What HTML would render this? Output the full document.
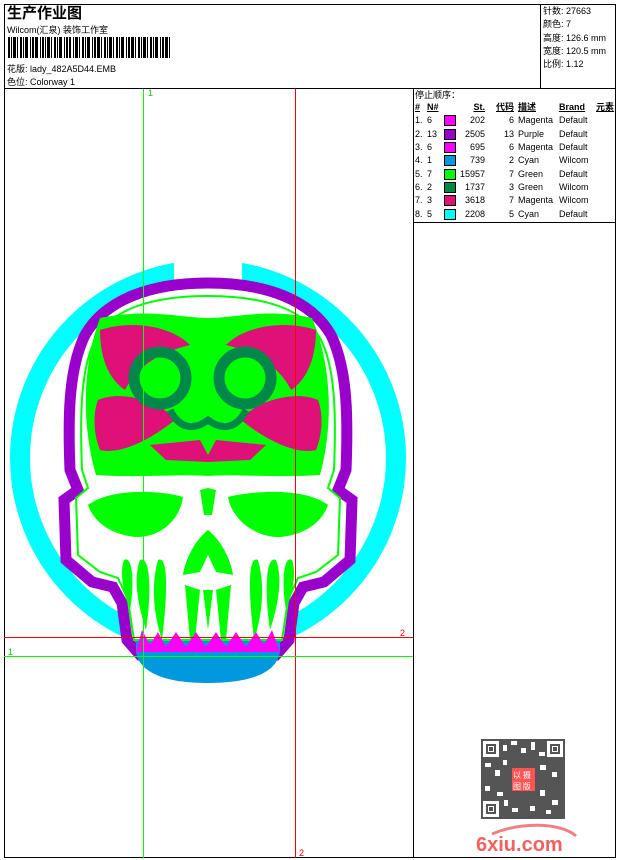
<!DOCTYPE html>
<html><head><meta charset="utf-8"><style>
body{margin:0;width:620px;height:860px;background:#fff;position:relative;overflow:hidden;font-family:"Liberation Sans","Noto Sans CJK SC",sans-serif;font-size:9px;color:#000}
.a{position:absolute;white-space:nowrap}
.t td{padding:0;height:13.3px;line-height:13px}
</style></head><body>
<svg width="620" height="860" style="position:absolute;left:0;top:0">
<circle cx="208" cy="458" r="188" fill="none" stroke="#00ffff" stroke-width="20"/>
<rect x="174" y="250" width="68" height="40" fill="#fff"/>
<rect x="95" y="637" width="226" height="40" fill="#fff"/>
<g fill="none" stroke="#000" stroke-width="1">
<rect x="4.5" y="4.5" width="611" height="853"/>
<line x1="540.5" y1="4" x2="540.5" y2="88"/>
<line x1="4" y1="88.5" x2="616" y2="88.5"/>
<line x1="413.5" y1="88" x2="413.5" y2="858"/>
<line x1="413" y1="222.5" x2="616" y2="222.5"/>
</g>
<g fill="#000">
<rect x="8" y="37" width="2" height="21"/><rect x="11" y="37" width="1" height="21"/><rect x="13" y="37" width="3" height="21"/><rect x="17" y="37" width="1" height="21"/><rect x="20" y="37" width="2" height="21"/><rect x="23" y="37" width="1" height="21"/><rect x="25" y="37" width="3" height="21"/><rect x="30" y="37" width="1" height="21"/><rect x="32" y="37" width="2" height="21"/><rect x="35" y="37" width="3" height="21"/><rect x="40" y="37" width="1" height="21"/><rect x="42" y="37" width="2" height="21"/><rect x="45" y="37" width="1" height="21"/><rect x="47" y="37" width="3" height="21"/><rect x="51" y="37" width="1" height="21"/><rect x="54" y="37" width="2" height="21"/><rect x="57" y="37" width="1" height="21"/><rect x="59" y="37" width="3" height="21"/><rect x="64" y="37" width="1" height="21"/><rect x="66" y="37" width="2" height="21"/><rect x="69" y="37" width="2" height="21"/><rect x="73" y="37" width="1" height="21"/><rect x="75" y="37" width="3" height="21"/><rect x="79" y="37" width="1" height="21"/><rect x="82" y="37" width="2" height="21"/><rect x="85" y="37" width="1" height="21"/><rect x="87" y="37" width="3" height="21"/><rect x="92" y="37" width="1" height="21"/><rect x="94" y="37" width="2" height="21"/><rect x="97" y="37" width="3" height="21"/><rect x="101" y="37" width="1" height="21"/><rect x="104" y="37" width="2" height="21"/><rect x="107" y="37" width="1" height="21"/><rect x="109" y="37" width="3" height="21"/><rect x="113" y="37" width="1" height="21"/><rect x="116" y="37" width="2" height="21"/><rect x="119" y="37" width="1" height="21"/><rect x="121" y="37" width="3" height="21"/><rect x="126" y="37" width="1" height="21"/><rect x="128" y="37" width="2" height="21"/><rect x="131" y="37" width="3" height="21"/><rect x="135" y="37" width="1" height="21"/><rect x="138" y="37" width="2" height="21"/><rect x="141" y="37" width="1" height="21"/><rect x="143" y="37" width="3" height="21"/><rect x="147" y="37" width="1" height="21"/><rect x="150" y="37" width="2" height="21"/><rect x="153" y="37" width="1" height="21"/><rect x="155" y="37" width="3" height="21"/><rect x="160" y="37" width="1" height="21"/><rect x="162" y="37" width="2" height="21"/><rect x="165" y="37" width="3" height="21"/><rect x="169" y="37" width="1" height="21"/>
</g>
<path d="M208,283 C150,283 105,300 85,335 C68,370 68,420 70,470 L78,490 L64,500 L66,560 L92,582 L113,587 L122,603 L127,640 L140,655 L276,655 L289,640 L294,603 L303,587 L324,582 L350,560 L352,500 L338,490 L346,470 C348,420 348,370 331,335 C311,300 266,283 208,283 Z" stroke="#9900cc" stroke-width="11" fill="#fff"/>
<path d="M208,296 C150,296 110,310 95,340 C80,370 80,420 82,470 L88,488 L76,498 L78,555 L100,572 L118,578 L128,600 L134,640 L282,640 L288,600 L298,578 L316,572 L338,555 L340,498 L328,488 L334,470 C336,420 336,370 321,340 C306,310 266,296 208,296 Z" stroke="#00ff00" stroke-width="2" fill="none"/>
<path d="M100,318 C150,308 180,318 208,318 C236,318 266,308 312,318 C330,360 335,420 320,475 C280,478 240,474 208,476 C176,474 136,478 96,475 C80,420 84,360 100,318 Z" fill="#00ff00"/>
<path d="M100,330 C130,320 170,325 190,345 C170,350 140,360 125,390 C110,380 100,360 100,330 Z" fill="#dd1177"/>
<path d="M316,330 C286,320 246,325 226,345 C246,350 276,360 291,390 C306,380 316,360 316,330 Z" fill="#dd1177"/>
<path d="M98,400 C120,390 160,400 175,420 C150,440 120,455 100,450 C92,430 94,410 98,400 Z" fill="#dd1177"/>
<path d="M318,400 C296,390 256,400 241,420 C266,440 296,455 316,450 C324,430 322,410 318,400 Z" fill="#dd1177"/>
<path d="M150,445 L200,440 L208,455 L216,440 L266,445 L250,460 L208,462 L166,460 Z" fill="#dd1177"/>
<circle cx="160" cy="378" r="26" fill="none" stroke="#00884a" stroke-width="11"/>
<circle cx="245" cy="378" r="26" fill="none" stroke="#00884a" stroke-width="11"/>
<path d="M170,410 C180,430 195,430 208,420 C221,430 236,430 246,410" stroke="#00884a" stroke-width="7" fill="none"/>
<path d="M88,505 C110,488 160,490 183,497 C180,520 160,538 135,537 C110,534 94,522 88,505 Z" fill="#00ff00"/>
<path d="M328,505 C306,488 256,490 228,497 C232,520 256,538 281,537 C306,534 322,522 328,505 Z" fill="#00ff00"/>
<path d="M208,530 C195,540 185,560 183,575 L200,572 L208,555 L216,572 L233,575 C231,560 221,540 208,530 Z" fill="#00ff00"/>
<path d="M200,490 L208,488 L216,490 L212,515 L204,515 Z" fill="#00ff00"/>
<g fill="#00ff00">
<path d="M124,560 C132,555 135,580 130,610 C122,590 120,570 124,560Z"/>
<path d="M140,560 C150,555 152,590 146,630 C136,600 134,575 140,560Z"/>
<path d="M158,560 C168,555 168,590 162,640 C152,610 152,580 158,560Z"/>
<path d="M292,560 C284,555 281,580 286,610 C294,590 296,570 292,560Z"/>
<path d="M276,560 C266,555 264,590 270,630 C280,600 282,575 276,560Z"/>
<path d="M258,560 C248,555 248,590 254,640 C264,610 264,580 258,560Z"/>
<path d="M185,585 L200,590 L195,640 L190,640 Z"/><path d="M231,585 L216,590 L221,640 L226,640 Z"/>
<path d="M203,590 L213,590 L208,630 Z"/>
</g>
<path d="M136,652 C140,675 170,683 208,683 C246,683 276,675 280,652 L280,641 L136,641 Z" fill="#0099dd"/>
<path d="M136,652 L142,630 L150,645 L158,632 L166,647 L176,632 L186,647 L196,632 L206,647 L216,632 L226,647 L236,632 L246,647 L256,632 L264,645 L272,630 L280,652 Z" fill="#ff00ff"/>
<line x1="143.5" y1="89" x2="143.5" y2="858" stroke="#00ff00"/>
<line x1="295.5" y1="89" x2="295.5" y2="858" stroke="#ff0000"/>
<line x1="4" y1="637.5" x2="413" y2="637.5" stroke="#ff0000"/>
<line x1="4" y1="656.5" x2="413" y2="656.5" stroke="#00ff00"/>
<text x="148" y="96" font-size="9" fill="#00cc00" font-family="Liberation Sans">1</text>
<text x="400" y="636" font-size="9" fill="#ff0000" font-family="Liberation Sans">2</text>
<text x="8" y="655" font-size="9" fill="#00cc00" font-family="Liberation Sans">1</text>
<text x="299" y="856" font-size="9" fill="#ff0000" font-family="Liberation Sans">2</text>
<rect x="481" y="739" width="84" height="80" fill="#555"/>
<g fill="#fff">
<rect x="483" y="741" width="16" height="16"/><rect x="547" y="741" width="16" height="16"/><rect x="483" y="801" width="16" height="16"/>
<rect x="503" y="745" width="4" height="6"/><rect x="511" y="741" width="6" height="4"/><rect x="521" y="748" width="5" height="5"/><rect x="531" y="742" width="4" height="8"/><rect x="539" y="752" width="6" height="4"/>
<rect x="485" y="763" width="6" height="4"/><rect x="495" y="770" width="5" height="6"/><rect x="503" y="760" width="4" height="5"/><rect x="540" y="765" width="6" height="5"/><rect x="552" y="772" width="5" height="5"/><rect x="485" y="786" width="5" height="5"/><rect x="497" y="792" width="6" height="4"/><rect x="540" y="790" width="5" height="6"/><rect x="552" y="800" width="6" height="5"/><rect x="530" y="806" width="5" height="5"/><rect x="512" y="808" width="6" height="4"/><rect x="504" y="800" width="4" height="6"/><rect x="546" y="810" width="5" height="4"/>
</g>
<g fill="#555"><rect x="486" y="744" width="10" height="10"/><rect x="550" y="744" width="10" height="10"/><rect x="486" y="804" width="10" height="10"/></g>
<g fill="#fff"><rect x="488" y="746" width="6" height="6"/><rect x="552" y="746" width="6" height="6"/><rect x="488" y="806" width="6" height="6"/></g>
<g fill="#555"><rect x="489" y="747" width="4" height="4"/><rect x="553" y="747" width="4" height="4"/><rect x="489" y="807" width="4" height="4"/></g>
<rect x="512" y="768" width="23" height="23" fill="#f55"/>
<text x="513" y="778" font-size="8" fill="#fff" font-family="Noto Sans CJK SC">以 摄</text>
<text x="513" y="789" font-size="8" fill="#fff" font-family="Noto Sans CJK SC">图 版</text>
<path d="M492,834 C520,822 560,822 576,836" stroke="#f08080" stroke-width="3" fill="none"/>
<text x="476" y="851" font-size="20" font-weight="bold" fill="#f26060" font-family="Liberation Sans">6xiu.com</text>
</svg>
<div class="a" style="left:7px;top:2px;font-size:15px;font-weight:bold">生产作业图</div>
<div class="a" style="left:7px;top:23px">Wilcom(汇泉) 装饰工作室</div>
<div class="a" style="left:7px;top:62px">花版: lady_482A5D44.EMB</div>
<div class="a" style="left:7px;top:75px">色位: Colorway 1</div>
<div class="a" style="left:543px;top:5px;line-height:13.3px">针数: 27663<br>颜色: 7<br>高度: 126.6 mm<br>宽度: 120.5 mm<br>比例: 1.12</div>
<div class="a" style="left:415px;top:88px">停止顺序：</div>
<table class="t a" style="left:415px;top:101px;border-collapse:collapse;font-size:9px">
<tr style="font-weight:bold;text-decoration:underline"><td style="width:12px">#</td><td style="width:17px">N#</td><td style="width:14px"></td><td style="width:27px;text-align:right">St.</td><td style="width:29px;text-align:right">代码</td><td style="width:41px;padding-left:4px">描述</td><td style="width:37px">Brand</td><td>元素</td></tr>
<tr><td>1.</td><td>6</td><td><div style="width:10px;height:9px;background:#f0f;border:1px solid #000"></div></td><td align="right">202</td><td align="right">6</td><td style="padding-left:4px">Magenta</td><td>Default</td><td></td></tr>
<tr><td>2.</td><td>13</td><td><div style="width:10px;height:9px;background:#90c;border:1px solid #000"></div></td><td align="right">2505</td><td align="right">13</td><td style="padding-left:4px">Purple</td><td>Default</td><td></td></tr>
<tr><td>3.</td><td>6</td><td><div style="width:10px;height:9px;background:#f0f;border:1px solid #000"></div></td><td align="right">695</td><td align="right">6</td><td style="padding-left:4px">Magenta</td><td>Default</td><td></td></tr>
<tr><td>4.</td><td>1</td><td><div style="width:10px;height:9px;background:#09d;border:1px solid #000"></div></td><td align="right">739</td><td align="right">2</td><td style="padding-left:4px">Cyan</td><td>Wilcom</td><td></td></tr>
<tr><td>5.</td><td>7</td><td><div style="width:10px;height:9px;background:#0f0;border:1px solid #000"></div></td><td align="right">15957</td><td align="right">7</td><td style="padding-left:4px">Green</td><td>Default</td><td></td></tr>
<tr><td>6.</td><td>2</td><td><div style="width:10px;height:9px;background:#084;border:1px solid #000"></div></td><td align="right">1737</td><td align="right">3</td><td style="padding-left:4px">Green</td><td>Wilcom</td><td></td></tr>
<tr><td>7.</td><td>3</td><td><div style="width:10px;height:9px;background:#d17;border:1px solid #000"></div></td><td align="right">3618</td><td align="right">7</td><td style="padding-left:4px">Magenta</td><td>Wilcom</td><td></td></tr>
<tr><td>8.</td><td>5</td><td><div style="width:10px;height:9px;background:#0ff;border:1px solid #000"></div></td><td align="right">2208</td><td align="right">5</td><td style="padding-left:4px">Cyan</td><td>Default</td><td></td></tr>
</table>
</body></html>
